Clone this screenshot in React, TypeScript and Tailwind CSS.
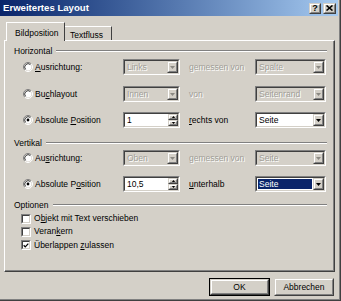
import React from "react";

const DIS = "text-[#a19e97] [text-shadow:1px_1px_0_#ffffff]";

function U({ t, i }: { t: string; i: number }) {
  return (
    <>
      {t.slice(0, i)}
      <span className="underline underline-offset-[1px]">{t[i]}</span>
      {t.slice(i + 1)}
    </>
  );
}

function Radio({ checked }: { checked?: boolean }) {
  return (
    <svg width="10" height="10" viewBox="0 0 10 10" className="shrink-0">
      <circle cx="5" cy="5" r="4.5" fill="#d4d0c8" />
      <path d="M1.8 8.2 A4.5 4.5 0 0 1 8.2 1.8" stroke="#808080" strokeWidth="1" fill="none" />
      <path d="M8.2 1.8 A4.5 4.5 0 0 1 1.8 8.2" stroke="#ffffff" strokeWidth="1" fill="none" />
      <circle cx="5" cy="5" r="3.4" fill="#ffffff" />
      <path d="M2.6 7.4 A3.4 3.4 0 0 1 7.4 2.6" stroke="#404040" strokeWidth="1" fill="none" />
      {checked && <circle cx="5" cy="5" r="1.4" fill="#000" />}
    </svg>
  );
}

function Check({ checked }: { checked?: boolean }) {
  return (
    <div className="w-[10px] h-[10px] shrink-0 border border-t-[#808080] border-l-[#808080] border-b-white border-r-white">
      <div className="w-full h-full bg-white border border-t-[#404040] border-l-[#404040] border-b-[#d4d0c8] border-r-[#d4d0c8] flex items-center justify-center">
        {checked && (
          <svg width="7" height="7" viewBox="0 0 7 7">
            <path d="M0.8 3.2 L2.6 5.2 L6.2 1.2" stroke="#000" strokeWidth="1.4" fill="none" />
          </svg>
        )}
      </div>
    </div>
  );
}

function Arrow({ disabled, up }: { disabled?: boolean; up?: boolean }) {
  return (
    <svg width="5" height="3" viewBox="0 0 5 3">
      <path d={up ? "M0 3 L5 3 L2.5 0 Z" : "M0 0 L5 0 L2.5 3 Z"} fill={disabled ? "#8a8882" : "#000"} />
    </svg>
  );
}

function Raised({ className, children }: { className?: string; children?: React.ReactNode }) {
  return (
    <div className={"border border-t-[#d4d0c8] border-l-[#d4d0c8] border-b-[#404040] border-r-[#404040] " + (className || "")}>
      <div className="w-full h-full bg-[#d4d0c8] border border-t-white border-l-white border-b-[#808080] border-r-[#808080] flex flex-col items-center justify-center">
        {children}
      </div>
    </div>
  );
}

function Select({
  w,
  text,
  disabled,
  hl,
}: {
  w: string;
  text: string;
  disabled?: boolean;
  hl?: boolean;
}) {
  return (
    <div className={w + " h-[16px] shrink-0 border border-t-[#808080] border-l-[#808080] border-b-white border-r-white"}>
      <div
        className={
          "w-full h-full flex border border-t-[#404040] border-l-[#404040] border-b-[#d4d0c8] border-r-[#d4d0c8] " +
          (disabled ? "bg-[#d4d0c8]" : "bg-white")
        }
      >
        <div className="flex-1 flex items-center p-[1px] min-w-0">
          <div
            className={
              "h-full flex-1 flex items-center pl-[1px] " +
              (hl ? "bg-[#0a246a] text-white" : disabled ? DIS : "text-black")
            }
          >
            {text}
          </div>
        </div>
        <Raised className="w-[11px] h-full">
          <Arrow disabled={disabled} />
        </Raised>
      </div>
    </div>
  );
}

function Spin({ w, text }: { w: string; text: string }) {
  return (
    <div className={w + " h-[16px] shrink-0 border border-t-[#808080] border-l-[#808080] border-b-white border-r-white"}>
      <div className="w-full h-full flex bg-white border border-t-[#404040] border-l-[#404040] border-b-[#d4d0c8] border-r-[#d4d0c8]">
        <div className="flex-1 flex items-center pl-[2px] text-black">{text}</div>
        <div className="w-[10px] h-full flex flex-col">
          <Raised className="w-full h-1/2">
            <Arrow up />
          </Raised>
          <Raised className="w-full h-1/2">
            <Arrow />
          </Raised>
        </div>
      </div>
    </div>
  );
}

function Group({ label }: { label: string }) {
  return (
    <div className="h-[14px] flex items-center pl-[9px] pr-[6px]">
      <span className="text-black">{label}</span>
      <div className="flex-1 ml-[4px] h-[2px] border-t border-t-[#808080] border-b border-b-white" />
    </div>
  );
}

function Row({
  className,
  checked,
  label,
  children,
}: {
  className?: string;
  checked?: boolean;
  label: React.ReactNode;
  children: React.ReactNode;
}) {
  return (
    <div className={"h-[16px] flex items-center pl-[18px] " + (className || "")}>
      <Radio checked={checked} />
      <div className="w-[90px] pl-[2px] text-black">{label}</div>
      {children}
    </div>
  );
}

export default function App() {
  return (
    <div className="w-[341px] h-[301px] bg-[#d4d0c8] flex flex-col overflow-hidden [font-family:'Liberation_Sans',Arial,sans-serif] text-[8.5px] leading-none border-r border-b border-r-[#404040] border-b-[#404040]">
      <div className="flex flex-col flex-1 border-r border-b border-r-[#808080] border-b-[#808080]">
        {/* Title bar */}
        <div className="h-[16px] mr-[1px] flex items-center bg-gradient-to-r from-[#0a246a] to-[#a6caf0] pl-[3px] pr-[2px]">
          <span className="text-white font-bold text-[9.6px]">Erweitertes Layout</span>
          <div className="flex-1" />
          <Raised className="w-[12px] h-[11px]">
            <span className="font-bold text-[9px] text-black">?</span>
          </Raised>
          <Raised className="w-[13px] h-[11px] ml-[2px]">
            <svg width="7" height="6" viewBox="0 0 7 6">
              <path d="M0.5 0.5 L6.5 5.5 M6.5 0.5 L0.5 5.5" stroke="#000" strokeWidth="1.6" />
            </svg>
          </Raised>
        </div>

        {/* Tabs */}
        <div className="h-[24px] flex items-end pl-[6px] relative z-10">
          <div className="h-[19px] w-[59px] -mb-[1px] bg-[#d4d0c8] border-l border-t border-l-white border-t-white border-r border-r-[#404040] flex items-start pt-[6px] pl-[8px] text-black">
            Bildposition
          </div>
          <div className="h-[14px] w-[47px] border-t border-t-white border-r border-r-[#404040] flex items-start pt-[4px] pl-[5px] text-black">
            Textfluss
          </div>
        </div>

        {/* Panel */}
        <div className="ml-[4px] w-[331px] h-[232px] border border-t-white border-l-white border-b-[#404040] border-r-[#404040]">
          <div className="w-full h-full border-b border-r border-b-[#808080] border-r-[#808080] flex flex-col">
            <div className="mt-[3px]">
              <Group label="Horizontal" />
            </div>
            <Row className="mt-[1px]" label={<U t="Ausrichtung:" i={0} />}>
              <Select w="w-[57px]" text="Links" disabled />
              <div className={"w-[75px] pl-[9px] " + DIS}>gemessen von</div>
              <Select w="w-[71px]" text="Spalte" disabled />
            </Row>
            <Row className="mt-[11px]" label={<U t="Buchlayout" i={2} />}>
              <Select w="w-[57px]" text="Innen" disabled />
              <div className={"w-[75px] pl-[9px] " + DIS}>von</div>
              <Select w="w-[71px]" text="Seitenrand" disabled />
            </Row>
            <Row className="mt-[10px]" checked label={<U t="Absolute Position" i={9} />}>
              <Spin w="w-[57px]" text="1" />
              <div className="w-[75px] pl-[9px] text-black">
                <U t="rechts von" i={0} />
              </div>
              <Select w="w-[71px]" text="Seite" />
            </Row>

            <div className="mt-[8px]">
              <Group label="Vertikal" />
            </div>
            <Row label={<U t="Ausrichtung:" i={2} />}>
              <Select w="w-[57px]" text="Oben" disabled />
              <div className={"w-[75px] pl-[9px] " + DIS}>gemessen von</div>
              <Select w="w-[71px]" text="Seite" disabled />
            </Row>
            <Row className="mt-[10px]" checked label={<U t="Absolute Position" i={10} />}>
              <Spin w="w-[57px]" text="10,5" />
              <div className="w-[75px] pl-[9px] text-black">
                <U t="unterhalb" i={0} />
              </div>
              <Select w="w-[71px]" text="Seite" hl />
            </Row>

            <div className="mt-[6px]">
              <Group label="Optionen" />
            </div>
            <div className="h-[13px] flex items-center pl-[16px]">
              <Check />
              <span className="ml-[3px] text-black">
                <U t="Objekt mit Text verschieben" i={1} />
              </span>
            </div>
            <div className="h-[13px] flex items-center pl-[16px]">
              <Check />
              <span className="ml-[3px] text-black">
                <U t="Verankern" i={5} />
              </span>
            </div>
            <div className="h-[14px] flex items-center pl-[16px]">
              <Check checked />
              <span className="ml-[3px] text-black">
                <U t="Überlappen zulassen" i={11} />
              </span>
            </div>
          </div>
        </div>

        {/* Buttons */}
        <div className="flex justify-end mt-[6px] pr-[5px]">
          <div className="w-[61px] h-[18px] border border-black">
            <Raised className="w-full h-full">
              <span className="text-black">OK</span>
            </Raised>
          </div>
          <Raised className="w-[60px] h-[18px] ml-[4px]">
            <span className="text-black">Abbrechen</span>
          </Raised>
        </div>
      </div>
    </div>
  );
}
